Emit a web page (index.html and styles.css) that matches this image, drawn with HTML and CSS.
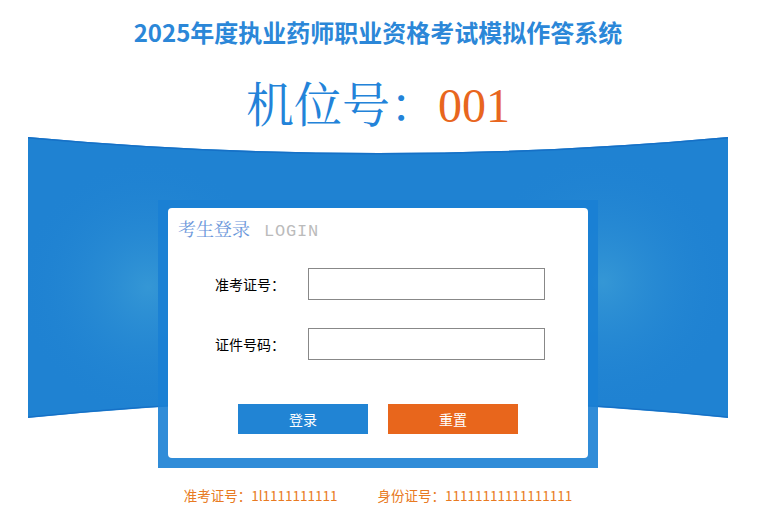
FILE: index.html
```html
<html>
<head>
<meta charset="utf-8">
<title>2025年度执业药师职业资格考试模拟作答系统</title>
<link rel="stylesheet" href="styles.css">
</head>
<body>

<div class="page">
<h1 class="title">2025年度执业药师职业资格考试模拟作答系统</h1>

<div class="seat">机位号：<span class="seat-no">001</span></div>

<div class="stage">
<svg class="band" width="700" height="281" viewBox="0 0 700 281">
  <defs>
    <radialGradient id="glowL" cx="120" cy="150" r="130" gradientUnits="userSpaceOnUse">
      <stop offset="0" stop-color="#3a9cd6" stop-opacity="0.8"/>
      <stop offset="1" stop-color="#1f82d2" stop-opacity="0"/>
    </radialGradient>
    <radialGradient id="glowR" cx="575" cy="145" r="130" gradientUnits="userSpaceOnUse">
      <stop offset="0" stop-color="#3a9cd6" stop-opacity="0.8"/>
      <stop offset="1" stop-color="#1f82d2" stop-opacity="0"/>
    </radialGradient>
  </defs>
  <path d="M0,0 Q350,32 700,0 L700,281 Q350,245 0,281 Z" fill="#1f82d2"/>
  <path d="M0,0 Q350,32 700,0 L700,281 Q350,245 0,281 Z" fill="url(#glowL)"/>
  <path d="M0,0 Q350,32 700,0 L700,281 Q350,245 0,281 Z" fill="url(#glowR)"/>
  <path d="M0,0.8 Q350,32.8 700,0.8" fill="none" stroke="#1670c6" stroke-width="1.6"/>
  <path d="M0,280.2 Q350,244.2 700,280.2" fill="none" stroke="#1670c6" stroke-width="1.2"/>
</svg>

<div class="frame">
  <div class="card">
    <div class="card-head">考生登录<span class="card-en">LOGIN</span></div>

    <div class="row">
      <label class="row-label">准考证号：</label>
      <input class="row-input" type="text">
    </div>
    <div class="row row-second">
      <label class="row-label">证件号码：</label>
      <input class="row-input" type="text">
    </div>

    <div class="buttons">
      <button class="btn btn-login">登录</button>
      <button class="btn btn-reset">重置</button>
    </div>
  </div>
</div>
</div>

<div class="footer">
  <span>准考证号：1l1111111111</span>
  <span>身份证号：11111111111111111</span>
</div>
</div>

</body>
</html>
```

FILE: styles.css
```css
body {
  margin: 0;
  font-family: "Noto Sans CJK SC", "Liberation Sans", sans-serif;
  background-color: #fff;
}

.page {
  width: 700px;
  margin-left: 28px;
}

.title {
  margin: 0;
  padding-top: 16px;
  font-size: 24px;
  line-height: 32px;
  font-weight: bold;
  color: #2b87d8;
  text-align: center;
}

.seat {
  margin-top: 24px;
  font-family: "Noto Serif CJK SC", "Noto Sans CJK SC", serif;
  font-size: 48px;
  line-height: 60px;
  color: #2383d9;
  text-align: center;
}
.seat-no {
  font-family: "Liberation Serif", serif;
  color: #e8661e;
}

.stage {
  position: relative;
  margin-top: 1px;
  height: 330px;
  padding-top: 63px;
  box-sizing: border-box;
}
.band {
  position: absolute;
  top: 0;
  left: 0;
  display: block;
}

.frame {
  position: relative;
  width: 440px;
  margin: 0 auto;
  padding: 8px 10px 10px 10px;
  box-sizing: border-box;
  background-color: rgba(26, 127, 212, 0.9);
}

.card {
  background-color: #fff;
  border-radius: 4px;
  padding: 8px 10px 24px 10px;
}

.card-head {
  font-family: "Noto Serif CJK SC", "Noto Sans CJK SC", serif;
  font-size: 18px;
  line-height: 24px;
  color: #6a96da;
}
.card-en {
  margin-left: 14px;
  font-family: "Liberation Mono", monospace;
  font-size: 17px;
  letter-spacing: 0.8px;
  color: #bbbbbb;
}

.row {
  display: flex;
  align-items: center;
  margin-top: 24px;
  padding-left: 37px;
}
.row-second {
  margin-top: 28px;
}
.row-label {
  width: 93px;
  font-size: 14px;
  color: #000;
}
.row-input {
  width: 237px;
  height: 32px;
  box-sizing: border-box;
  border: 1px solid #888;
  margin: 0;
  padding: 0 4px;
}

.buttons {
  display: flex;
  justify-content: center;
  gap: 20px;
  margin-top: 44px;
}
.btn {
  width: 130px;
  height: 30px;
  border: none;
  margin: 0;
  padding: 0;
  font-family: "Noto Sans CJK SC", sans-serif;
  font-size: 14px;
  color: #fff;
}
.btn-login {
  background-color: #2184d4;
}
.btn-reset {
  background-color: #e8661c;
}

.footer {
  display: flex;
  justify-content: center;
  gap: 40px;
  margin-top: 18px;
  font-size: 13.5px;
  line-height: 20px;
  color: #e87a22;
}
```
